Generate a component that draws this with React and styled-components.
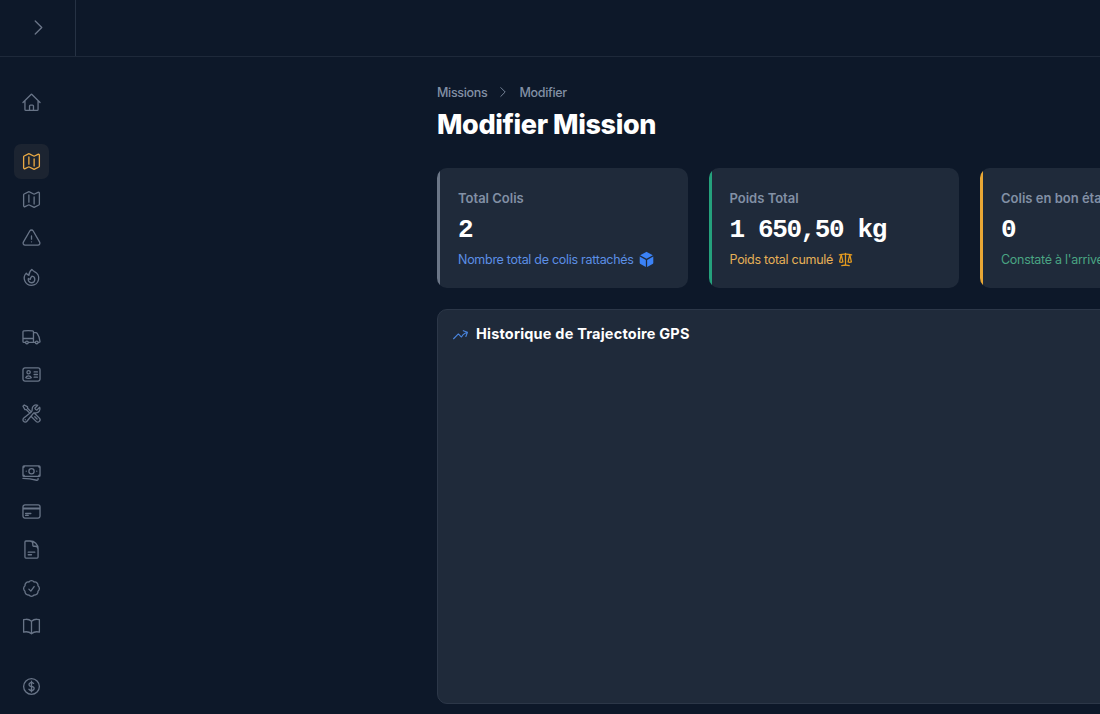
import React from 'react'
import styled, { createGlobalStyle } from 'styled-components'
import {
  HiOutlineHome,
  HiOutlineMap,
  HiOutlineExclamationTriangle,
  HiOutlineFire,
  HiOutlineTruck,
  HiOutlineIdentification,
  HiOutlineWrenchScrewdriver,
  HiOutlineBanknotes,
  HiOutlineCreditCard,
  HiOutlineDocumentText,
  HiOutlineCheckBadge,
  HiOutlineBookOpen,
  HiOutlineCurrencyDollar,
  HiOutlineChevronRight,
  HiOutlineArrowTrendingUp,
  HiMiniCube,
  HiMiniScale,
} from 'react-icons/hi2'

const GlobalStyle = createGlobalStyle`
  * {
    box-sizing: border-box;
  }
  body {
    margin: 0;
    background: #0d1829;
    color: #fff;
    font-family: Inter, "Liberation Sans", sans-serif;
    overflow: hidden;
  }
  h1, h2, p {
    margin: 0;
  }
`

const Page = styled.div`
  display: flex;
  flex-direction: column;
  height: 100vh;
  overflow: hidden;
`

const TopBar = styled.header`
  display: flex;
  flex: none;
  height: 57px;
  border-bottom: 1px solid #1e293a;
`

const Toggle = styled.button`
  display: flex;
  align-items: center;
  justify-content: center;
  width: 76px;
  padding: 0 0 1px 1px;
  border: 0;
  border-right: 1px solid #263244;
  background: none;
  color: #6b7688;
`

const Body = styled.div`
  display: flex;
  flex: 1;
  min-height: 0;
`

const Sidebar = styled.nav`
  display: flex;
  flex: none;
  flex-direction: column;
  gap: 24.3px;
  width: 76px;
  padding: 27.6px 0 0 14px;
`

const NavGroup = styled.div`
  display: flex;
  flex-direction: column;
  gap: 3.55px;
`

const NavItem = styled.a`
  display: flex;
  flex: none;
  align-items: center;
  justify-content: center;
  width: 35px;
  height: 35px;
  border-radius: 7px;
  background: ${(props) => (props.$active ? '#1c2431' : 'transparent')};
  color: ${(props) => (props.$active ? '#e9a944' : '#687487')};
`

const Main = styled.main`
  flex: none;
  width: 1065px;
  margin-left: 361px;
  padding-top: 26px;
`

const Breadcrumbs = styled.div`
  display: flex;
  align-items: center;
  gap: 9px;
  height: 18px;
  font-size: 12.5px;
  font-weight: 500;
  letter-spacing: -0.32px;
  color: #8290a5;
`

const Title = styled.h1`
  margin-top: 6px;
  font-size: 27px;
  font-weight: 800;
  line-height: 35px;
  letter-spacing: -0.38px;
  white-space: nowrap;
`

const Stats = styled.div`
  display: grid;
  grid-template-columns: repeat(4, 250.5px);
  gap: 21px;
  margin-top: 26px;
`

// the accent stripe is painted in the background so its inner edge stays straight
const Stat = styled.section`
  height: 120px;
  padding: 20px 17px 0 21px;
  border-radius: 10px;
  background: linear-gradient(to right, ${(props) => props.$accent} 3.5px, #1f2a3a 3.5px);
  white-space: nowrap;
`

const StatLabel = styled.p`
  font-size: 13px;
  font-weight: 600;
  line-height: 20px;
  color: #8290a5;
`

const StatValue = styled.p`
  margin-top: 6px;
  font-family: "Liberation Mono", monospace;
  font-size: 26px;
  font-weight: 700;
  line-height: 33px;
  letter-spacing: -1.38px;
`

const StatNote = styled.p`
  display: flex;
  align-items: center;
  gap: 4px;
  margin-top: 3px;
  font-size: 12.5px;
  line-height: 19px;
  letter-spacing: -0.28px;
  color: ${(props) => props.$color};

  svg {
    color: ${(props) => props.$iconColor};
  }
`

const Panel = styled.section`
  height: 395px;
  margin-top: 21px;
  padding: 13px 14px;
  border: 1px solid #2c3748;
  border-radius: 10px;
  background: #1f2a3a;
`

const PanelTitle = styled.h2`
  display: flex;
  align-items: center;
  gap: 7px;
  font-size: 14.5px;
  font-weight: 700;
  line-height: 22px;
  letter-spacing: 0.2px;

  svg {
    color: #4a86e0;
  }
`

const navGroups = [
  [HiOutlineHome],
  [HiOutlineMap, HiOutlineMap, HiOutlineExclamationTriangle, HiOutlineFire],
  [HiOutlineTruck, HiOutlineIdentification, HiOutlineWrenchScrewdriver],
  [
    HiOutlineBanknotes,
    HiOutlineCreditCard,
    HiOutlineDocumentText,
    HiOutlineCheckBadge,
    HiOutlineBookOpen,
  ],
  [HiOutlineCurrencyDollar],
]

const stats = [
  {
    label: 'Total Colis',
    value: '2',
    note: 'Nombre total de colis rattachés',
    accent: '#6b7687',
    color: '#5c8fe6',
    iconColor: '#3b82f6',
    Icon: HiMiniCube,
  },
  {
    label: 'Poids Total',
    value: '1 650,50 kg',
    note: 'Poids total cumulé',
    accent: '#25a17c',
    color: '#e6b057',
    iconColor: '#e39a20',
    Icon: HiMiniScale,
  },
  {
    label: 'Colis en bon état',
    value: '0',
    note: "Constaté à l'arrivée",
    accent: '#e8a735',
    color: '#4aa583',
  },
]

function App() {
  return (
    <Page>
      <GlobalStyle />
      <TopBar>
        <Toggle>
          <HiOutlineChevronRight size={21} />
        </Toggle>
      </TopBar>
      <Body>
        <Sidebar>
          {navGroups.map((group, g) => (
            <NavGroup key={g}>
              {group.map((Icon, i) => (
                <NavItem key={i} $active={g === 1 && i === 0}>
                  <Icon size={21} />
                </NavItem>
              ))}
            </NavGroup>
          ))}
        </Sidebar>
        <Main>
          <Breadcrumbs>
            <span>Missions</span>
            <HiOutlineChevronRight size={14} />
            <span>Modifier</span>
          </Breadcrumbs>
          <Title>Modifier Mission</Title>
          <Stats>
            {stats.map(({ label, value, note, accent, color, iconColor, Icon }) => (
              <Stat key={label} $accent={accent}>
                <StatLabel>{label}</StatLabel>
                <StatValue>{value}</StatValue>
                <StatNote $color={color} $iconColor={iconColor}>
                  {note}
                  {Icon && <Icon size={17} />}
                </StatNote>
              </Stat>
            ))}
          </Stats>
          <Panel>
            <PanelTitle>
              <HiOutlineArrowTrendingUp size={17} />
              Historique de Trajectoire GPS
            </PanelTitle>
          </Panel>
        </Main>
      </Body>
    </Page>
  )
}

export default App
